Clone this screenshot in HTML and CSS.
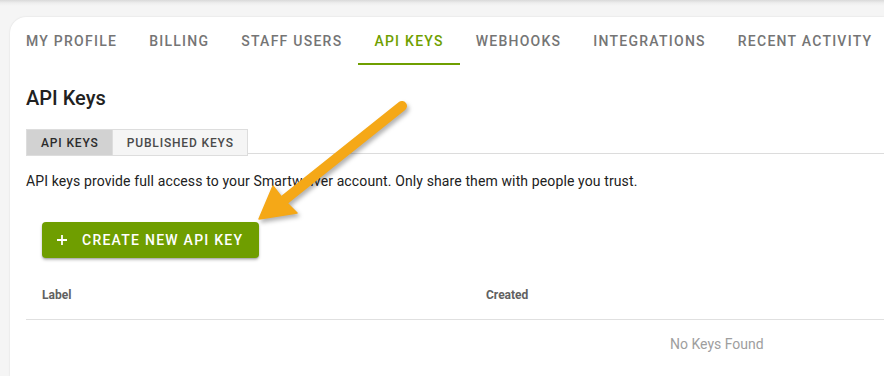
FILE: index.html
```html
<!DOCTYPE html>
<html>
<head>
<meta charset="utf-8">
<link rel="stylesheet" href="styles.css">
</head>
<body>
<div class="page">
  <div class="card">
    <nav class="tabs">
      <div class="tab">MY PROFILE</div>
      <div class="tab">BILLING</div>
      <div class="tab">STAFF USERS</div>
      <div class="tab active">API KEYS</div>
      <div class="tab">WEBHOOKS</div>
      <div class="tab">INTEGRATIONS</div>
      <div class="tab">RECENT ACTIVITY</div>
    </nav>
    <div class="content">
      <h1 class="title">API Keys</h1>
      <div class="subtabs">
        <div class="subtab on">API KEYS</div>
        <div class="subtab">PUBLISHED KEYS</div>
        <div class="subfill"></div>
      </div>
      <p class="desc">API keys provide full access to your Smartwaiver account. Only share them with people you trust.</p>
      <button class="create"><svg class="plus" width="10" height="10" viewBox="0 0 10 10"><path d="M5 0v10M0 5h10" stroke="#fff" stroke-width="1.8"/></svg><span>CREATE NEW API KEY</span></button>
      <div class="table">
        <div class="thead">
          <div class="th">Label</div>
          <div class="th">Created</div>
        </div>
        <div class="empty">No Keys Found</div>
      </div>
    </div>
  </div>
  <svg class="arrow" width="884" height="376" viewBox="0 0 884 376">
    <g class="arrow-g">
      <line x1="402" y1="106" x2="283" y2="201" stroke="#f5a817" stroke-width="10" stroke-linecap="round"/>
      <path d="M259 219 L273 186 L283 199 L297 213 Z" fill="#f5a817" stroke="#f5a817" stroke-width="1.5" stroke-linejoin="round"/>
    </g>
  </svg>
</div>
</body>
</html>
```
FILE: styles.css
```css
* { box-sizing: border-box; }
html, body { margin: 0; padding: 0; }
body {
  width: 884px;
  height: 376px;
  overflow: hidden;
  font-family: Roboto, "Liberation Sans", sans-serif;
  background: linear-gradient(#d9d9d9 0, #eeeeee 3px, #f5f5f5 6px, #f5f5f5 100%);
}
.page {
  position: relative;
  padding: 17px 0 0 10px;
  height: 376px;
  overflow: hidden;
}
.card {
  height: 359px;
  background: #fff;
  border-radius: 16px 0 0 0;
  box-shadow: 0 0 2px rgba(0,0,0,0.12);
  overflow: hidden;
}
.tabs {
  display: flex;
  height: 48px;
}
.tab {
  padding: 0 16px;
  height: 48px;
  line-height: 48px;
  font-size: 14px;
  font-weight: 500;
  letter-spacing: 1.25px;
  color: #757575;
  border-bottom: 2px solid transparent;
  white-space: nowrap;
}
.tab.active {
  color: #6f9f00;
  border-bottom-color: #6f9f00;
}
.content {
  padding: 0 0 0 16px;
}
.title {
  margin: 21px 0 0;
  font-size: 20px;
  line-height: 24px;
  font-weight: 500;
  color: #212121;
}
.subtabs {
  display: flex;
  margin-top: 19px;
  align-items: flex-start;
}
.subtab {
  height: 27px;
  line-height: 26px;
  padding: 0 13px 0 14px;
  font-size: 12px;
  font-weight: 500;
  letter-spacing: 0.85px;
  color: #4a4a4a;
  background: #f5f5f5;
  border: 1px solid #dddddd;
}
.subtab.on {
  background: #d2d2d2;
  color: #2b2b2b;
  border-right: none;
}
.subfill {
  flex: 1;
  height: 25px;
  border-bottom: 1px solid #dcdcdc;
}
.desc {
  margin: 15px 0 0;
  font-size: 14px;
  line-height: 20px;
  letter-spacing: 0.12px;
  color: #212121;
}
.create {
  display: flex;
  align-items: center;
  margin: 31px 0 0 16px;
  height: 36px;
  width: 217px;
  padding: 0 0 0 15px;
  border: none;
  border-radius: 4px;
  background: #6f9e00;
  color: #fff;
  font-family: Roboto, "Liberation Sans", sans-serif;
  font-size: 14px;
  font-weight: 500;
  letter-spacing: 1.25px;
  box-shadow: 0 2px 3px rgba(0,0,0,0.25), 0 1px 1px rgba(0,0,0,0.12);
}
.plus { margin-right: 15px; }
.table {
  margin-top: 13px;
}
.thead {
  display: grid;
  grid-template-columns: 444px 1fr;
  height: 49px;
  align-items: center;
  border-bottom: 1px solid #e0e0e0;
}
.th {
  padding: 0 16px;
  font-size: 12px;
  font-weight: 700;
  color: #616161;
}
.empty {
  height: 48px;
  line-height: 48px;
  padding-left: 644px;
  font-size: 14px;
  color: #9e9e9e;
}
.arrow {
  position: absolute;
  left: 0;
  top: 0;
  pointer-events: none;
}
.arrow-g {
  filter: drop-shadow(2px 3px 2px rgba(0,0,0,0.3));
}
```
